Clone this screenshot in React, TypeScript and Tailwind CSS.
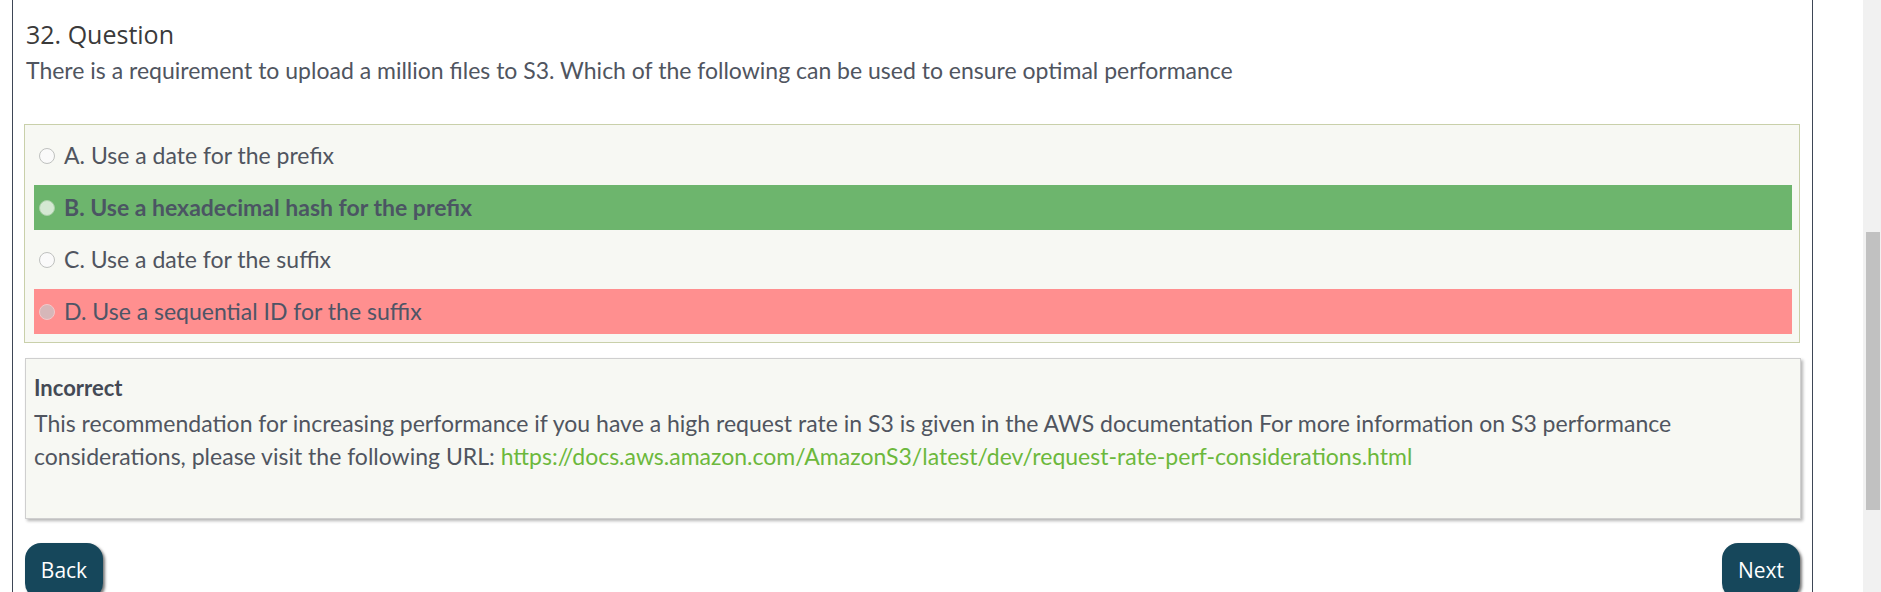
const options = [
  { key: 'A', text: 'Use a date for the prefix', state: 'none' },
  { key: 'B', text: 'Use a hexadecimal hash for the prefix', state: 'correct' },
  { key: 'C', text: 'Use a date for the suffix', state: 'none' },
  { key: 'D', text: 'Use a sequential ID for the suffix', state: 'wrong' },
];

function Radio({ state }: { state: string }) {
  const fill =
    state === 'correct'
      ? 'bg-[#d4e8d3] border-[#a9cfa8]'
      : state === 'wrong'
      ? 'bg-[#d6b7b9] border-[#f2c8ca]'
      : 'bg-[#fafafa] border-[#bfc1bf]';
  return <span className={`inline-block h-[16px] w-[16px] shrink-0 rounded-full border-[1.5px] ${fill}`} />;
}

export default function App() {
  return (
    <div className="flex h-[592px] overflow-hidden bg-white font-['Lato',sans-serif] text-[#50555f]">
      <div className="w-[12px] shrink-0" />
      {/* Main column */}
      <div className="w-[1801px] shrink-0 border-x border-[#3e4656] pl-[11px] pr-[12px] pt-[17px]">
        <h2 className="pl-[2px] font-['Open_Sans',sans-serif] text-[25px] leading-[34px] text-[#3a3a3a]">32. Question</h2>
        <p className="pl-[2px] text-[23px] leading-[38px]">
          There is a requirement to upload a million files to S3. Which of the following can be used to ensure optimal performance
        </p>

        {/* Options */}
        <div className="mt-[35px] flex flex-col gap-[7px] border border-[#c9d0aa] bg-[#f7f8f3] py-[8px] pl-[9px] pr-[7px]">
          {options.map((o) => (
            <div
              key={o.key}
              className={`flex h-[45px] items-center gap-[9px] pl-[5px] text-[23px] ${
                o.state === 'correct'
                  ? 'bg-[#6db56d] font-bold text-[#4b5563]'
                  : o.state === 'wrong'
                  ? 'bg-[#ff8f8f] text-[#4e5566]'
                  : ''
              }`}
            >
              <Radio state={o.state} />
              <span>
                {o.key}. {o.text}
              </span>
            </div>
          ))}
        </div>

        {/* Feedback */}
        <div className="ml-[1px] mt-[15px] w-[1776px] border border-[#cfcfcf] bg-[#f7f8f3] pb-[45px] pl-[8px] pr-[8px] pt-[12px] shadow-[2px_2px_3px_#b5b5b5]">
          <div className="text-[22px] font-bold leading-[33px] text-[#444a55]">Incorrect</div>
          <p className="mt-[3px] text-[23px] leading-[33px]">
            This recommendation for increasing performance if you have a high request rate in S3 is given in the AWS
            documentation For more information on S3 performance considerations, please visit the following URL:{' '}
            <a className="text-[#6cb83c]">https://docs.aws.amazon.com/AmazonS3/latest/dev/request-rate-perf-considerations.html</a>
          </p>
        </div>

        {/* Navigation */}
        <div className="mt-[24px] flex justify-between pl-[1px]">
          <button className="h-[56px] w-[78px] rounded-[16px] bg-[#16475b] font-['Open_Sans',sans-serif] text-[21px] text-white shadow-[2px_2px_3px_#777]">
            Back
          </button>
          <button className="h-[56px] w-[78px] rounded-[16px] bg-[#16475b] font-['Open_Sans',sans-serif] text-[21px] text-white shadow-[2px_2px_3px_#777]">
            Next
          </button>
        </div>
      </div>
      <div className="flex-1" />
      {/* Scrollbar */}
      <div className="relative w-[18px] shrink-0 bg-[#f1f1f1]">
        <div className="absolute left-[3px] right-[1px] top-[232px] h-[278px] bg-[#c1c1c1]" />
      </div>
    </div>
  );
}
